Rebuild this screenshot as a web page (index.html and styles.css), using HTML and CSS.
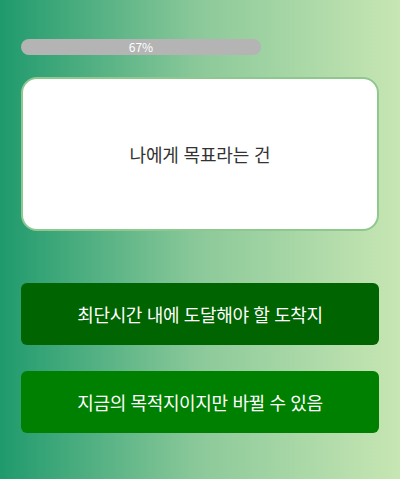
FILE: index.html
```html
<!DOCTYPE html>
<html lang="ko">
<head>
<meta charset="utf-8">
<title>목표 퀴즈</title>
<link rel="stylesheet" href="styles.css">
</head>
<body>
<main class="quiz">
  <div class="progress">
    <div class="progress-fill" style="width: 67%">67%</div>
  </div>
  <section class="question">
    <p>나에게 목표라는 건</p>
  </section>
  <div class="answers">
    <button class="answer answer-dark">최단시간 내에 도달해야 할 도착지</button>
    <button class="answer answer-light">지금의 목적지이지만 바뀔 수 있음</button>
  </div>
</main>
</body>
</html>
```

FILE: styles.css
```css
html, body {
  margin: 0;
  height: 100%;
}

body {
  background: linear-gradient(to right, #1f9a6d 0%, #8cc99a 50%, #c7e6b3 100%);
  font-family: "Noto Sans CJK KR", "Noto Sans", sans-serif;
}

.quiz {
  padding: 39px 21px 0;
  display: flex;
  flex-direction: column;
}

.progress {
  height: 16px;
}

.progress-fill {
  height: 16px;
  border-radius: 8px;
  background: #b4b4b4;
  color: #ffffff;
  font-size: 12px;
  line-height: 16px;
  text-align: center;
}

.question {
  margin-top: 22px;
  height: 150px;
  background: #ffffff;
  border: 2px solid #8fc88f;
  border-radius: 16px;
  display: flex;
  align-items: center;
  justify-content: center;
}

.question p {
  margin: 0;
  color: #333333;
  font-size: 18px;
  letter-spacing: -0.01em;
}

.answers {
  margin-top: 52px;
  display: flex;
  flex-direction: column;
  gap: 26px;
}

.answer {
  height: 62px;
  border: none;
  border-radius: 6px;
  color: #ffffff;
  font-family: inherit;
  font-size: 18px;
  letter-spacing: -0.02em;
  padding: 0;
}

.answer-dark {
  background: #006400;
}

.answer-light {
  background: #008000;
}
```
